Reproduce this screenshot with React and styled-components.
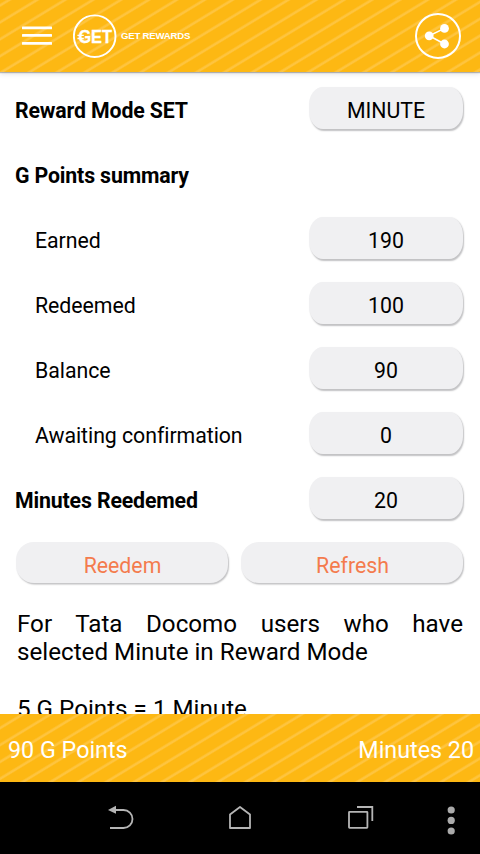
import styled, { createGlobalStyle } from "styled-components";

const GlobalStyle = createGlobalStyle`
  * {
    box-sizing: border-box;
  }

  body {
    margin: 0;
    background: #fff;
    color: #000;
    font-family: Roboto, "Liberation Sans", sans-serif;
  }
`;

const Screen = styled.div`
  width: 480px;
  height: 854px;
  display: flex;
  flex-direction: column;
  overflow: hidden;
`;

const StripedBar = styled.div`
  display: flex;
  align-items: center;
  flex-shrink: 0;
  color: #fff;
  background: repeating-linear-gradient(
    148.8deg,
    #fdb813 ${({ $offset }) => $offset - 0.4}px,
    #fec33a ${({ $offset }) => $offset + 1}px,
    #fec542 ${({ $offset }) => $offset + 2.2}px,
    #fdb813 ${({ $offset }) => $offset + 3.6}px,
    #fdb813 ${({ $offset }) => $offset + 14.05}px
  );
`;

const Header = styled(StripedBar)`
  height: 72px;
  padding: 0 19px 0 22px;
  box-shadow: 0 1px 1px rgba(0, 0, 0, 0.25), 0 2px 5px rgba(0, 0, 0, 0.12);
`;

const IconButton = styled.button`
  display: flex;
  padding: 0;
  border: 0;
  background: none;
  color: inherit;
  cursor: pointer;
`;

const Brand = styled.div`
  display: flex;
  align-items: center;
  gap: 4px;
  flex: 1;
  margin-left: 21px;
`;

const BrandName = styled.span`
  font-family: "Liberation Sans", Arial, sans-serif;
  font-size: 9.6px;
  font-weight: bold;
  letter-spacing: -0.2px;
  line-height: 12px;
`;

const Content = styled.main`
  flex: 1;
  min-height: 0;
  padding: 6px 16px 0 15px;
  overflow: hidden;
`;

const Row = styled.div`
  display: flex;
  align-items: center;
  justify-content: space-between;
  height: 65px;
  padding-left: ${({ $indent }) => ($indent ? "20px" : "0")};
`;

const Label = styled.span`
  font-size: 21.3px;
  font-weight: ${({ $bold }) => ($bold ? 700 : 400)};
  letter-spacing: ${({ $bold }) => ($bold ? "-0.15px" : "-0.05px")};
`;

const Pill = styled.div`
  display: flex;
  align-items: center;
  justify-content: center;
  width: 154px;
  height: 42px;
  margin: 0 1px 5px 0;
  padding-top: 5px;
  border-radius: 14px / 18px;
  background: #f0f0f2;
  box-shadow: 1px 1.5px 1.5px #c2c2c4;
  font-size: 21.3px;
`;

const Actions = styled.div`
  display: flex;
  gap: 13px;
  padding: 9px 0 0 1px;
`;

const ActionButton = styled.button`
  width: ${({ $width }) => $width}px;
  height: 41px;
  padding: 5px 0 0 1px;
  border: 0;
  border-radius: 18px;
  background: #f0f0f2;
  box-shadow: 1px 1.5px 1.5px #c2c2c4;
  color: #f47b4d;
  font-family: inherit;
  font-size: 21.3px;
  cursor: pointer;
`;

const Note = styled.p`
  margin: 27px 1px 0 2px;
  font-size: 24.2px;
  line-height: 28.3px;
  text-align: justify;
`;

const Footer = styled(StripedBar)`
  position: relative;
  justify-content: space-between;
  height: 68px;
  padding: 4px 6px 0 8px;
  font-size: 23.3px;
`;

const NavBar = styled.nav`
  display: flex;
  flex-shrink: 0;
  height: 72px;
  background: #000;
`;

const points = [
  { label: "Earned", value: "190" },
  { label: "Redeemed", value: "100" },
  { label: "Balance", value: "90" },
  { label: "Awaiting confirmation", value: "0" },
];

const MenuIcon = () => (
  <svg width="30" height="22" viewBox="0 0 30 22" fill="#fff">
    <rect y="1.5" width="30" height="2.8" rx="0.5" />
    <rect y="9" width="30" height="2.8" rx="0.5" />
    <rect y="17" width="30" height="2.8" rx="0.5" />
  </svg>
);

const Logo = () => (
  <svg width="44" height="44" viewBox="0 0 44 44" fill="none" stroke="#fff">
    <circle cx="21.7" cy="22.2" r="20.8" strokeWidth="1.9" />
    <text
      x="5.4"
      y="29.2"
      fill="#fff"
      stroke="#fff"
      strokeWidth="0.3"
      fontFamily="Liberation Sans, Arial, sans-serif"
      fontSize="17.6"
      fontWeight="bold"
      textLength="33.6"
      lengthAdjust="spacingAndGlyphs"
    >
      GET
    </text>
    <path d="M4.4 21.3h6.4M4.4 24.5h6.4" strokeWidth="1.3" />
  </svg>
);

const ShareIcon = () => (
  <svg width="46" height="46" viewBox="0 0 46 46" fill="none" stroke="#fff">
    <circle cx="23" cy="23" r="22" strokeWidth="2" />
    <path d="M29.5 15.4 14.2 22.8l15.3 8.2" strokeWidth="1.6" />
    <g fill="#fff" stroke="none">
      <circle cx="14.2" cy="22.8" r="4.4" />
      <circle cx="29.5" cy="15.4" r="4.4" />
      <circle cx="29.5" cy="31" r="4.4" />
    </g>
  </svg>
);

const NavIcons = () => (
  <svg width="480" height="72" fill="none" stroke="#b5b5b5" strokeWidth="1.8">
    <path d="M115 28h8.5a9 9 0 0 1 0 18H110" />
    <path d="M108 28l8-4.2v8z" fill="#b5b5b5" stroke="none" />
    <path d="M230 32.5 240 25l10 7.5V46h-20z" strokeLinejoin="round" />
    <rect x="349" y="29.8" width="18.4" height="16" rx="0.5" />
    <path d="M357 25h15.3v14" />
    <g fill="#aaa" stroke="none">
      <circle cx="451.2" cy="28" r="3.6" />
      <circle cx="451.2" cy="38.4" r="3.6" />
      <circle cx="451.2" cy="49" r="3.6" />
    </g>
  </svg>
);

const App = () => {
  return (
    <Screen>
      <GlobalStyle />
      <Header as="header" $offset={3}>
        <IconButton aria-label="Menu">
          <MenuIcon />
        </IconButton>
        <Brand>
          <Logo />
          <BrandName>GET REWARDS</BrandName>
        </Brand>
        <IconButton aria-label="Share">
          <ShareIcon />
        </IconButton>
      </Header>

      <Content>
        <Row>
          <Label $bold>Reward Mode SET</Label>
          <Pill>MINUTE</Pill>
        </Row>
        <Row>
          <Label $bold>G Points summary</Label>
        </Row>
        {points.map(({ label, value }) => (
          <Row key={label} $indent>
            <Label>{label}</Label>
            <Pill>{value}</Pill>
          </Row>
        ))}
        <Row>
          <Label $bold>Minutes Reedemed</Label>
          <Pill>20</Pill>
        </Row>
        <Actions>
          <ActionButton $width={212}>Reedem</ActionButton>
          <ActionButton $width={222}>Refresh</ActionButton>
        </Actions>
        <Note>
          For Tata Docomo users who have selected Minute in Reward Mode
          <br />
          <br />5 G Points = 1 Minute
        </Note>
      </Content>

      <Footer as="footer" $offset={10.4}>
        <span>90 G Points</span>
        <span>Minutes 20</span>
      </Footer>
      <NavBar>
        <NavIcons />
      </NavBar>
    </Screen>
  );
};

export default App;
